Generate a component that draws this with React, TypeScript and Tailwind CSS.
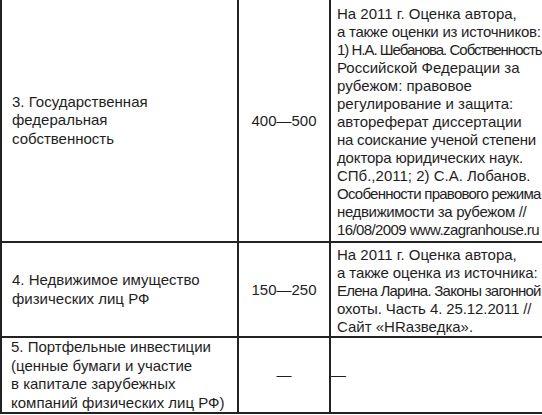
import React from "react";

type Line = { text: string; tight?: string };

const rows: {
  name: string[];
  value: string;
  source: Line[];
  sourceClass: string;
}[] = [
  {
    name: ["3. Государственная", "федеральная", "собственность"],
    value: "400—500",
    sourceClass: "pt-[5px] pb-[2px]",
    source: [
      { text: "На 2011 г. Оценка автора," },
      { text: "а также оценки из источников:", tight: "tracking-[-0.25px]" },
      { text: "1) Н.А. Шебанова. Собственность", tight: "tracking-[-1px]" },
      { text: "Российской Федерации за" },
      { text: "рубежом: правовое" },
      { text: "регулирование и защита:" },
      { text: "автореферат диссертации" },
      { text: "на соискание ученой степени", tight: "tracking-[-0.25px]" },
      { text: "доктора юридических наук.", tight: "tracking-[-0.15px]" },
      { text: "СПб.,2011; 2) С.А. Лобанов." },
      { text: "Особенности правового режима", tight: "tracking-[-0.75px]" },
      { text: "недвижимости за рубежом //", tight: "tracking-[-0.35px]" },
      { text: "16/08/2009 www.zagranhouse.ru", tight: "tracking-[-0.6px]" },
    ],
  },
  {
    name: ["4. Недвижимое имущество", "физических лиц РФ"],
    value: "150—250",
    sourceClass: "pt-[3px]",
    source: [
      { text: "На 2011 г. Оценка автора," },
      { text: "а также оценка из источника:", tight: "tracking-[-0.1px]" },
      { text: "Елена Ларина. Законы загонной", tight: "tracking-[-0.75px]" },
      { text: "охоты. Часть 4. 25.12.2011 //", tight: "tracking-[-0.1px]" },
      { text: "Сайт «HRазведка»." },
    ],
  },
];

export default function App() {
  return (
    <div className="w-[542px] h-[415px] overflow-hidden bg-white text-[15px] text-[#1e1e1e] font-['Liberation_Sans',Arial,sans-serif]">
      <div className="w-[560px] border-l-2 border-[#222]">
        {rows.map((row) => (
          <div key={row.value} className="flex border-b-2 border-[#222]">
            <div className="w-[237px] shrink-0 border-r-2 border-[#222] pl-[10px] flex items-center leading-[18.5px]">
              <div>
                {row.name.map((l) => (
                  <div key={l} className="whitespace-nowrap">{l}</div>
                ))}
              </div>
            </div>
            <div className="w-[92px] shrink-0 border-r-2 border-[#222] flex items-center justify-center leading-[18px]">
              {row.value}
            </div>
            <div className={`flex-1 pl-[6px] leading-[18px] ${row.sourceClass}`}>
              {row.source.map((l) => (
                <div key={l.text} className={`whitespace-nowrap ${l.tight ?? ""}`}>
                  {l.text}
                </div>
              ))}
            </div>
          </div>
        ))}
        <div className="flex border-b-2 border-[#222]">
          <div className="w-[237px] shrink-0 border-r-2 border-[#222] pl-[9px] leading-[18.5px]">
            <div>5. Портфельные инвестиции</div>
            <div>(ценные бумаги и участие</div>
            <div>в капитале зарубежных</div>
            <div>компаний физических лиц РФ)</div>
          </div>
          <div className="w-[92px] shrink-0 border-r-2 border-[#222] flex items-center justify-center">
            —
          </div>
          <div className="flex-1 flex items-center">—</div>
        </div>
      </div>
    </div>
  );
}
